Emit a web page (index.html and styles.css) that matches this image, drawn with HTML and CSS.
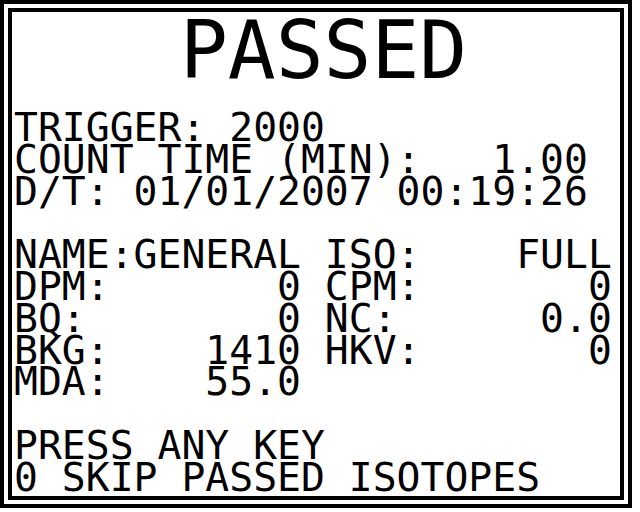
FILE: index.html
```html
<!DOCTYPE html>
<html lang="en">
<head>
<meta charset="utf-8">
<title>Isotope check</title>
<link rel="stylesheet" href="styles.css">
</head>
<body>
<div class="frame">
  <div class="screen">
    <div class="title">PASSED</div>
    <div class="line">TRIGGER: 2000</div>
    <div class="line">COUNT TIME (MIN):   1.00</div>
    <div class="line">D/T: 01/01/2007 00:19:26</div>
    <div class="line"> </div>
    <div class="line">NAME:GENERAL ISO:    FULL</div>
    <div class="line">DPM:       0 CPM:       0</div>
    <div class="line">BQ:        0 NC:      0.0</div>
    <div class="line">BKG:    1410 HKV:       0</div>
    <div class="line">MDA:    55.0</div>
    <div class="line"> </div>
    <div class="line">PRESS ANY KEY</div>
    <div class="line">0 SKIP PASSED ISOTOPES</div>
  </div>
</div>
</body>
</html>
```
FILE: styles.css
```css
html, body {
  margin: 0;
  padding: 0;
  background: #fff;
}

/* double rule around the LCD */
.frame {
  box-sizing: border-box;
  width: 632px;
  height: 508px;
  border: 4px solid #000;
  padding: 4px;
  background: #fff;
}

.screen {
  box-sizing: border-box;
  height: 100%;
  border: 4px solid #000;
  padding: 6.7px 0 0 2px;
  color: #000;
  font-family: "DejaVu Sans Mono", "Liberation Mono", monospace;
}

.title {
  font-size: 79.5px;
  line-height: 63.5px;
  height: 63.5px;
  padding-left: 166px;
  margin-bottom: 30.1px;
  white-space: pre;
}

.line {
  font-size: 39.73px;
  line-height: 31.75px;
  height: 31.75px;
  white-space: pre;
}
```
